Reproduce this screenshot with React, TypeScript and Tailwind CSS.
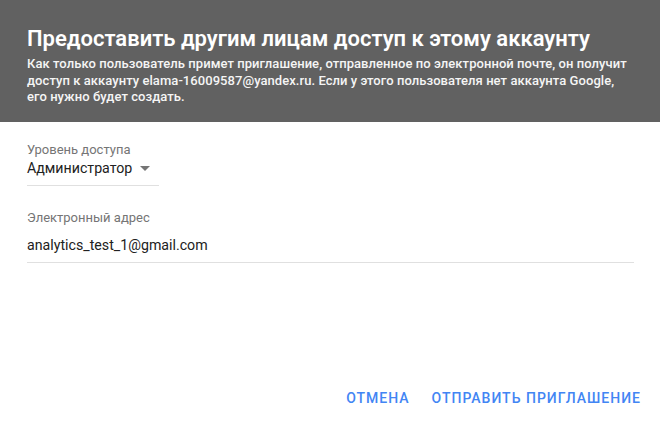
import React from "react";

export default function App() {
  return (
    <div className="w-[660px] h-[427px] bg-white flex flex-col overflow-hidden" style={{ fontFamily: "Roboto, 'Liberation Sans', sans-serif" }}>
      <div className="bg-[#616161] h-[122px] px-[27px] pt-[25px]">
        <h1 className="text-[22px] leading-[28px] font-semibold text-white">Предоставить другим лицам доступ к этому аккаунту</h1>
        <p className="mt-[3px] w-[604px] text-[13px] leading-[16.5px] font-medium tracking-[0.06px] text-[#f5f5f5]">
          Как только пользователь примет приглашение, отправленное по электронной почте, он получит доступ к аккаунту elama-16009587@yandex.ru. Если у этого пользователя нет аккаунта Google, его нужно будет создать.
        </p>
      </div>
      <div className="px-[27px] pt-[20px] flex flex-col">
        <div className="w-[132px] border-b border-[#e0e0e0] pb-[7px]">
          <div className="text-[13px] leading-[16px] text-[#757575]">Уровень доступа</div>
          <div className="flex items-center text-[14.2px] leading-[20px] text-[#212121]">
            <span>Администратор</span>
            <svg width="10" height="5" viewBox="0 0 10 5" className="ml-[8px]"><path d="M0 0h10L5 5z" fill="#757575" /></svg>
          </div>
        </div>
        <div className="mt-[24px] w-[607px] border-b border-[#e0e0e0] pb-[7px]">
          <div className="text-[13px] leading-[16px] text-[#757575]">Электронный адрес</div>
          <div className="mt-[9px] text-[14.2px] leading-[20px] text-[#212121]">analytics_test_1@gmail.com</div>
        </div>
      </div>
      <div className="flex-1" />
      <div className="flex justify-end items-center gap-[22px] pr-[19px] pb-[21px]">
        <button className="text-[14px] leading-[16px] font-medium tracking-[1px] text-[#4285f4] uppercase">Отмена</button>
        <button className="text-[14px] leading-[16px] font-medium tracking-[1px] text-[#4285f4] uppercase">Отправить приглашение</button>
      </div>
    </div>
  );
}
